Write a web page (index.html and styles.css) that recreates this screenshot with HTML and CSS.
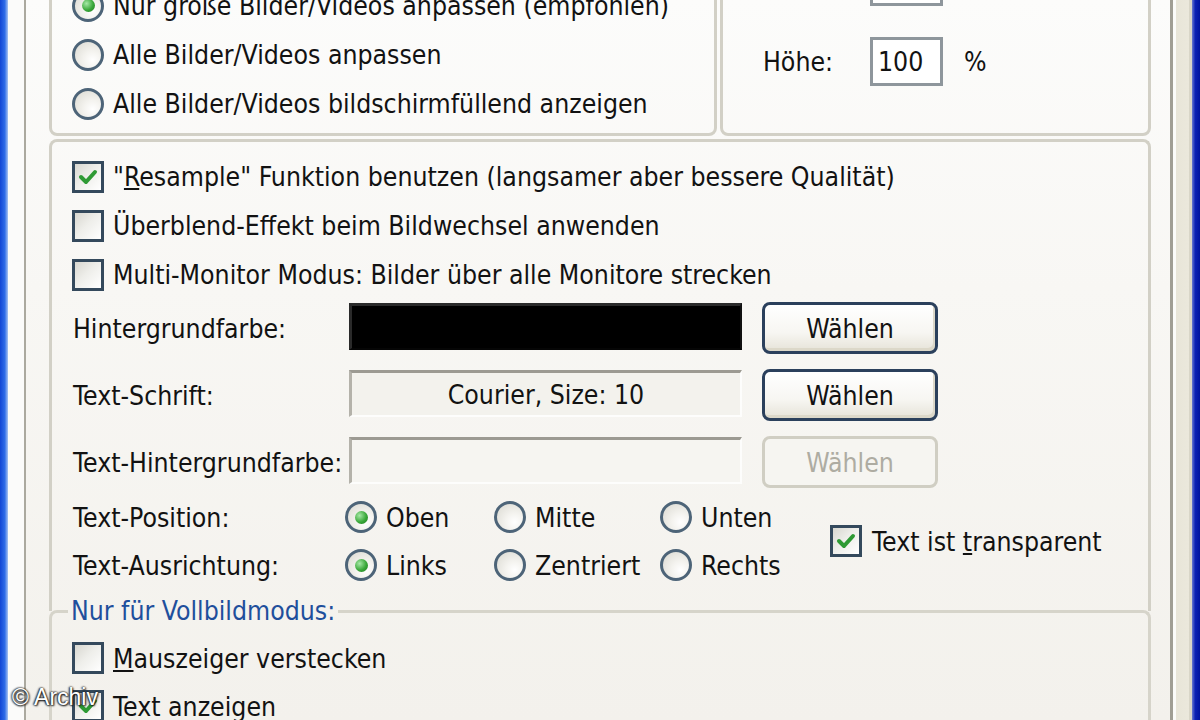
FILE: index.html
```html
<!DOCTYPE html>
<html lang="de">
<head>
<meta charset="utf-8">
<title>Anzeige-Optionen</title>
<link rel="stylesheet" href="styles.css">
</head>
<body>
<div class="screen">
  <div class="frame-l"></div>
  <div class="dlg">
    <div class="dlg-pad-l"></div>
    <div class="tabpage">
      <div class="top-row">
        <div class="gbox gbox-scale">
          <div class="opt"><span class="radio on"></span><span class="lbl">Nur große Bilder/Videos anpassen (empfohlen)</span></div>
          <div class="opt"><span class="radio"></span><span class="lbl">Alle Bilder/Videos anpassen</span></div>
          <div class="opt"><span class="radio"></span><span class="lbl">Alle Bilder/Videos bildschirmfüllend anzeigen</span></div>
        </div>
        <div class="gbox gbox-size">
          <div class="size-row"><span class="size-label"></span><span class="num"></span><span class="pct"></span></div>
          <div class="size-row"><span class="size-label">Höhe:</span><span class="num">100</span><span class="pct">%</span></div>
        </div>
      </div>

      <div class="gbox gbox-display">
        <div class="opt"><span class="check on"><svg viewBox="0 0 26 26"><polyline points="6,13 11,18 20,8"/></svg></span><span class="lbl">"<u>R</u>esample" Funktion benutzen (langsamer aber bessere Qualität)</span></div>
        <div class="opt"><span class="check"></span><span class="lbl">Überblend-Effekt beim Bildwechsel anwenden</span></div>
        <div class="opt"><span class="check"></span><span class="lbl">Multi-Monitor Modus: Bilder über alle Monitore strecken</span></div>

        <div class="form">
          <span class="flabel">Hintergrundfarbe:</span>
          <span class="field black"></span>
          <span class="btn">Wählen</span>

          <span class="flabel">Text-Schrift:</span>
          <span class="field font">Courier, Size: 10</span>
          <span class="btn">Wählen</span>

          <span class="flabel">Text-Hintergrundfarbe:</span>
          <span class="field empty"></span>
          <span class="btn disabled">Wählen</span>
        </div>

        <div class="textpos">
          <span class="flabel">Text-Position:</span>
          <span class="ropt"><span class="radio on"></span><span class="lbl">Oben</span></span>
          <span class="ropt"><span class="radio"></span><span class="lbl">Mitte</span></span>
          <span class="ropt"><span class="radio"></span><span class="lbl">Unten</span></span>
          <span class="ropt transp"><span class="check on"><svg viewBox="0 0 26 26"><polyline points="6,13 11,18 20,8"/></svg></span><span class="lbl">Text ist <u>t</u>ransparent</span></span>

          <span class="flabel">Text-Ausrichtung:</span>
          <span class="ropt"><span class="radio on"></span><span class="lbl">Links</span></span>
          <span class="ropt"><span class="radio"></span><span class="lbl">Zentriert</span></span>
          <span class="ropt"><span class="radio"></span><span class="lbl">Rechts</span></span>
        </div>
      </div>

      <fieldset class="gbox-full">
        <legend>Nur für Vollbildmodus:</legend>
        <div class="opt"><span class="check"></span><span class="lbl"><u>M</u>auszeiger verstecken</span></div>
        <div class="opt"><span class="check on"><svg viewBox="0 0 26 26"><polyline points="6,13 11,18 20,8"/></svg></span><span class="lbl">Text anzeigen</span></div>
      </fieldset>
    </div>
    <div class="dlg-pad-r"></div>
  </div>
  <div class="frame-r"></div>
  <div class="watermark">© Archiv</div>
</div>
</body>
</html>
```

FILE: styles.css
```css
html, body {
  margin: 0;
  padding: 0;
}

body {
  width: 1200px;
  height: 720px;
  overflow: hidden;
  font-family: "DejaVu Sans Condensed", "Liberation Sans", sans-serif;
  font-size: 26.4px;
  color: #121212;
  background: #ece9d8;
}

.screen {
  position: relative;
  display: flex;
  width: 1200px;
  height: 720px;
  overflow: hidden;
}

.frame-l {
  width: 8px;
  flex: none;
  background: linear-gradient(90deg, #1246d4, #2f6ce8 60%, #a9c4f2);
}

.frame-r {
  width: 8px;
  flex: none;
  background: linear-gradient(90deg, #6a7bd0, #0c22b4 40%, #00149e);
}

.dlg {
  flex: 1;
  display: flex;
  min-width: 0;
}

.dlg-pad-l {
  width: 16px;
  flex: none;
  background: #fbfbfa;
}

.dlg-pad-r {
  width: 19px;
  flex: none;
  background: linear-gradient(90deg, #fbfbf9 0, #fbfbf9 3px, #e8e5d8 3px, #ebe8dc 16px, #d9d6c8 16px);
}

.tabpage {
  flex: 1;
  min-width: 0;
  border-left: 2px solid #aba99f;
  border-right: 3px solid #a09e94;
  background: linear-gradient(#fcfcfb, #f8f7f4 40%, #f3f1ec);
  padding: 0 19px 0 23px;
}

.gbox {
  border: 3px solid #d2d0c6;
  border-radius: 8px;
}

/* top row */
.top-row {
  display: flex;
  gap: 3px;
  margin-top: -50px;
}

.gbox-scale {
  box-sizing: border-box;
  width: 668px;
  flex: none;
  padding: 28px 0 5px 20px;
}

.gbox-size {
  flex: 1;
  padding: 4px 0 0 40px;
  display: flex;
  flex-direction: column;
  gap: 31px;
}

.size-row {
  display: flex;
  align-items: center;
  height: 49px;
}

.size-label {
  width: 107px;
  white-space: nowrap;
}

.num {
  box-sizing: border-box;
  width: 73px;
  height: 49px;
  border: 3px solid #8e969c;
  background: #fff;
  padding-left: 5px;
  display: flex;
  align-items: center;
}

.pct {
  margin-left: 21px;
}

/* options */
.opt {
  display: flex;
  align-items: center;
  height: 49px;
  gap: 9px;
  white-space: nowrap;
}

.lbl {
  white-space: nowrap;
}

.radio {
  box-sizing: border-box;
  width: 32px;
  height: 32px;
  flex: none;
  border-radius: 50%;
  border: 3px solid #4d6478;
  background: radial-gradient(circle at 68% 70%, #ffffff 0, #f4f3ef 35%, #d9d8d0 100%);
  display: flex;
  align-items: center;
  justify-content: center;
}

.radio.on::after {
  content: "";
  width: 13px;
  height: 13px;
  border-radius: 50%;
  background: radial-gradient(circle at 35% 35%, #a6e8a6 0, #3aa83a 55%, #1c7a1c 100%);
}

.check {
  box-sizing: border-box;
  width: 32px;
  height: 32px;
  flex: none;
  border: 3px solid #34495c;
  background: linear-gradient(135deg, #d8d7d0 0, #eeeeea 45%, #ffffff 100%);
  display: flex;
  align-items: center;
  justify-content: center;
}

.check svg {
  width: 26px;
  height: 26px;
  display: block;
}

.check polyline {
  fill: none;
  stroke: #2e9a34;
  stroke-width: 4;
  stroke-linecap: round;
  stroke-linejoin: round;
}

/* display group */
.gbox-display {
  margin-top: 3px;
  padding: 10px 0 22px 20px;
  border-bottom: none;
  border-radius: 8px 8px 0 0;
}

.form {
  display: grid;
  grid-template-columns: 257px 393px 176px;
  grid-auto-rows: 52px;
  column-gap: 20px;
  row-gap: 15px;
  margin-top: 3px;
  align-items: center;
}

.flabel {
  white-space: nowrap;
  padding-left: 1px;
}

.field {
  box-sizing: border-box;
  height: 47px;
  align-self: start;
  margin-top: 1px;
  border-top: 3px solid #9c9a92;
  border-left: 3px solid #b4b2aa;
  border-right: 2px solid #fdfdfc;
  border-bottom: 2px solid #fdfdfc;
  display: flex;
  align-items: center;
  justify-content: center;
  white-space: nowrap;
}

.field.black {
  background: #000;
  border-color: #2a2a2a #111 #050505 #2a2a2a;
}

.field.font {
  background: #f3f2ed;
}

.field.empty {
  background: #f6f5f1;
}

.btn {
  box-sizing: border-box;
  height: 52px;
  border: 3px solid #2b405c;
  border-radius: 8px;
  background: linear-gradient(#ffffff, #f7f6f2 60%, #e6e3d8);
  box-shadow: inset -2px -3px 0 #dcd8c9;
  display: flex;
  align-items: center;
  justify-content: center;
  white-space: nowrap;
}

.btn.disabled {
  border-color: #d0cec3;
  color: #aeaca2;
  background: #f6f5f1;
  box-shadow: none;
}

.textpos {
  display: grid;
  grid-template-columns: 273px 149px 166px 170px auto;
  grid-auto-rows: 48px;
  margin-top: 5px;
  align-items: center;
}

.ropt {
  display: flex;
  align-items: center;
  gap: 9px;
  white-space: nowrap;
}

.ropt.transp {
  grid-column: 5;
  grid-row: 1 / span 2;
  gap: 10px;
}

/* fullscreen group */
.gbox-full {
  margin: -15px 0 0 0;
  padding: 8px 0 0 20px;
  border: 3px solid #d6d4ca;
  border-radius: 8px 8px 0 0;
  border-bottom: none;
  min-width: 0;
}

.gbox-full legend {
  color: #1f4f9c;
  line-height: 30px;
  padding: 0 3px;
  margin-left: -4px;
  white-space: nowrap;
}

.gbox-full .opt {
  height: 48px;
}

.watermark {
  position: absolute;
  left: 12px;
  top: 684px;
  font-family: "Liberation Sans", sans-serif;
  font-size: 23px;
  color: #ffffff;
  text-shadow: 0 0 2px #000, 1px 1px 2px #222, -1px 0 2px #333;
  white-space: nowrap;
}
```
